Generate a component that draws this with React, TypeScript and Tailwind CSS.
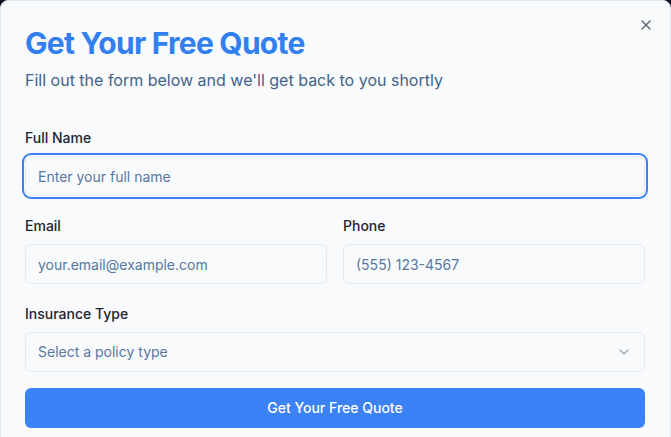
import React from 'react';
import { X, ChevronDown } from 'lucide-react';

const inputBase =
  'h-10 w-full rounded-md border border-[#e5eaf1] bg-[#f8fafc] px-3 text-sm text-[#1e293b] placeholder:text-[#58779c] outline-none';

function Field({ label, children }: { label: string; children: React.ReactNode }) {
  return (
    <div className="flex flex-col gap-2">
      <label className="text-sm font-medium leading-5 text-[#1c2433]">{label}</label>
      {children}
    </div>
  );
}

export default function App() {
  return (
    <div
      className="h-screen overflow-hidden bg-[#0b1220]"
      style={{ fontFamily: 'Inter, "Noto Sans", sans-serif' }}
    >
      <div className="relative w-full rounded-lg border border-[#e2e8f0] bg-[#f8fafc] py-6 pl-6 pr-[25px]">
        {/* close button */}
        <button className="absolute right-4 top-4 text-[#334155] opacity-80">
          <X className="h-4 w-4" strokeWidth={2} />
        </button>

        <div className="mb-[36px]">
          <h2 className="text-3xl font-bold leading-9 tracking-tight text-[#3280f0]">Get Your Free Quote</h2>
          <p className="mt-[7px] text-base leading-6 text-[#43638a]">
            Fill out the form below and we'll get back to you shortly
          </p>
        </div>

        <form className="flex flex-col gap-5">
          <Field label="Full Name">
            <input
              autoFocus
              placeholder="Enter your full name"
              className={`${inputBase} ring-2 ring-[#3b82f6] ring-offset-1 ring-offset-[#f8fafc]`}
            />
          </Field>

          <div className="grid grid-cols-2 gap-4">
            <Field label="Email">
              <input placeholder="your.email@example.com" className={inputBase} />
            </Field>
            <Field label="Phone">
              <input placeholder="(555) 123-4567" className={inputBase} />
            </Field>
          </div>

          <Field label="Insurance Type">
            <button
              type="button"
              className="flex h-10 w-full items-center justify-between rounded-md border border-[#e5eaf1] bg-[#f8fafc] px-3 text-sm text-[#58779c]"
            >
              <span>Select a policy type</span>
              <ChevronDown className="h-4 w-4 text-[#64748b] opacity-60" />
            </button>
          </Field>

          <button
            type="button"
            className="-mt-[4px] h-10 w-full rounded-md bg-[#3b82f6] text-sm font-medium text-white"
          >
            Get Your Free Quote
          </button>
        </form>
      </div>
    </div>
  );
}
